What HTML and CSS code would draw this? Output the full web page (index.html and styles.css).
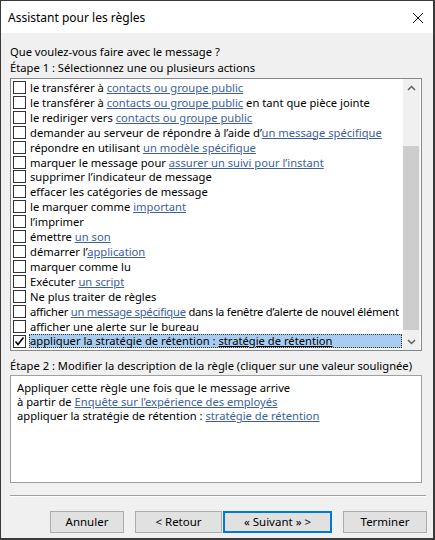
FILE: index.html
```html
<!DOCTYPE html>
<html lang="fr">
<head>
<meta charset="utf-8">
<title>Assistant pour les règles</title>
<link rel="stylesheet" href="styles.css">
</head>
<body>
<div class="window">
  <div class="titlebar">
    <span class="title">Assistant pour les règles</span>
    <svg class="close" width="12" height="12" viewBox="0 0 12 12"><path d="M1 1 L11 11 M11 1 L1 11" stroke="#111" stroke-width="1" fill="none"/></svg>
  </div>
  <div class="content">
    <div class="label">Que voulez-vous faire avec le message ?</div>
    <div class="label">Étape 1 : Sélectionnez une ou plusieurs actions</div>
    <div class="listbox">
      <div class="rows">
        <div class="row"><span class="cb"></span><span class="txt">le transférer à <a>contacts ou groupe public</a></span></div>
        <div class="row"><span class="cb"></span><span class="txt">le transférer à <a>contacts ou groupe public</a> en tant que pièce jointe</span></div>
        <div class="row"><span class="cb"></span><span class="txt">le rediriger vers <a>contacts ou groupe public</a></span></div>
        <div class="row"><span class="cb"></span><span class="txt">demander au serveur de répondre à l’aide d’<a>un message spécifique</a></span></div>
        <div class="row"><span class="cb"></span><span class="txt">répondre en utilisant <a>un modèle spécifique</a></span></div>
        <div class="row"><span class="cb"></span><span class="txt">marquer le message pour <a>assurer un suivi pour l’instant</a></span></div>
        <div class="row"><span class="cb"></span><span class="txt">supprimer l’indicateur de message</span></div>
        <div class="row"><span class="cb"></span><span class="txt">effacer les catégories de message</span></div>
        <div class="row"><span class="cb"></span><span class="txt">le marquer comme <a>important</a></span></div>
        <div class="row"><span class="cb"></span><span class="txt">l’imprimer</span></div>
        <div class="row"><span class="cb"></span><span class="txt">émettre <a>un son</a></span></div>
        <div class="row"><span class="cb"></span><span class="txt">démarrer l’<a>application</a></span></div>
        <div class="row"><span class="cb"></span><span class="txt">marquer comme lu</span></div>
        <div class="row"><span class="cb"></span><span class="txt">Exécuter <a>un script</a></span></div>
        <div class="row"><span class="cb"></span><span class="txt">Ne plus traiter de règles</span></div>
        <div class="row"><span class="cb"></span><span class="txt tight">afficher <a>un message spécifique</a> dans la fenêtre d’alerte de nouvel élément</span></div>
        <div class="row"><span class="cb"></span><span class="txt">afficher une alerte sur le bureau</span></div>
        <div class="row selected"><span class="cb checked"><svg width="11" height="11" viewBox="0 0 11 11"><path d="M1.5 5.5 L4 8.5 L9.5 1.5" stroke="#000" stroke-width="1.6" fill="none"/></svg></span><span class="txt">appliquer la stratégie de rétention : <a>stratégie de rétention</a></span></div>
      </div>
      <div class="scrollbar">
        <div class="arrow"><svg width="9" height="6" viewBox="0 0 9 6"><path d="M1 5 L4.5 1.5 L8 5" stroke="#606060" stroke-width="1.5" fill="none"/></svg></div>
        <div class="track"><div class="thumb"></div></div>
        <div class="arrow"><svg width="9" height="6" viewBox="0 0 9 6"><path d="M1 1 L4.5 4.5 L8 1" stroke="#606060" stroke-width="1.5" fill="none"/></svg></div>
      </div>
    </div>
    <div class="label step2">Étape 2 : Modifier la description de la règle (cliquer sur une valeur soulignée)</div>
    <div class="desc">
      <div class="dline">Appliquer cette règle une fois que le message arrive</div>
      <div class="dline">à partir de <a>Enquête sur l’expérience des employés</a></div>
      <div class="dline">appliquer la stratégie de rétention : <a>stratégie de rétention</a></div>
    </div>
    <div class="sep"></div>
    <div class="buttons">
      <button class="btn b-annuler">Annuler</button>
      <button class="btn b-retour">&lt; Retour</button>
      <button class="btn b-suivant">« Suivant » &gt;</button>
      <button class="btn b-terminer">Terminer</button>
    </div>
  </div>
</div>
</body>
</html>
```
FILE: styles.css
```css
* { box-sizing: border-box; }
html, body { margin: 0; padding: 0; }
body {
  width: 435px;
  height: 540px;
  font-family: "Noto Sans", "Open Sans", sans-serif;
  font-size: 11.2px;
  color: #000;
  background: #f0f0f0;
}
.window {
  width: 435px;
  height: 540px;
  border-top: 1px solid #3a3a3a;
  border-left: 1px solid #3a3a3a;
  border-right: 2px solid #3a3a3a;
  border-bottom: 2px solid #3a3a3a;
  background: #f0f0f0;
  display: flex;
  flex-direction: column;
}
.titlebar {
  height: 32px;
  background: #fff;
  display: flex;
  align-items: center;
  justify-content: space-between;
  padding: 0 9px 0 7px;
  flex: none;
}
.title { font-size: 12px; line-height: 16px; padding-top: 2px; }
.close { display: block; margin-top: 2px; }
.content {
  padding: 11px 0 0 9px;
  display: flex;
  flex-direction: column;
}
.label { line-height: 16px; height: 16px; white-space: nowrap; }
a { color: #3d5f9e; text-decoration: underline; }
.listbox {
  margin-top: 2px;
  width: 412px;
  height: 273px;
  border: 1px solid #828790;
  background: #fff;
  display: flex;
}
.rows {
  flex: 1;
  padding-top: 1px;
  overflow: hidden;
}
.row {
  height: 14.93px;
  display: flex;
  align-items: center;
  padding-left: 2px;
  white-space: nowrap;
}
.cb {
  width: 13px;
  height: 13px;
  border: 1px solid #333;
  background: #fff;
  flex: none;
  display: flex;
  align-items: center;
  justify-content: center;
}
.txt {
  display: block;
  margin-left: 3px;
  padding-left: 1px;
  line-height: 13px;
  height: 13px;
}
.txt.tight { letter-spacing: -0.25px; }
.row.selected .txt {
  flex: 1;
  background: #a8cdf1;
  outline: 1px dotted #333;
  outline-offset: -1px;
  margin-right: 1px;
  height: 14px;
  line-height: 14px;
}
.row.selected a { color: #000; }
.scrollbar {
  width: 17px;
  flex: none;
  margin-right: 1px;
  background: #f0f0f0;
  display: flex;
  flex-direction: column;
}
.arrow {
  height: 17px;
  display: flex;
  align-items: center;
  justify-content: center;
  flex: none;
}
.track { flex: 1; padding-top: 50px; padding-bottom: 3px; }
.thumb { height: 184px; background: #cdcdcd; margin: 0 1px 0 0; }
.step2 { margin-top: 7px; }
.desc {
  margin-top: 1px;
  width: 412px;
  height: 108px;
  border: 1px solid #a0a0a0;
  background: #fff;
  padding: 5px 6px 3px;
}
.dline { line-height: 14.2px; white-space: nowrap; }
.sep {
  margin-top: 12px;
  width: 416px;
  height: 2px;
  border-top: 1px solid #a0a0a0;
  border-bottom: 1px solid #fff;
}
.buttons {
  margin-top: 14px;
  display: flex;
  padding-left: 40px;
}
.btn {
  font-family: inherit;
  font-size: 11.5px;
  height: 22px;
  padding: 0;
  background: #e1e1e1;
  border: 1px solid #adadad;
  color: #000;
  line-height: 18px;
}
.b-annuler { width: 74px; }
.b-retour { width: 87px; margin-left: 11px; }
.b-suivant { width: 109px; margin-left: 1px; border-color: #0078d7; box-shadow: inset 0 0 0 1px #0078d7; }
.b-terminer { width: 84px; margin-left: 11px; }
```
